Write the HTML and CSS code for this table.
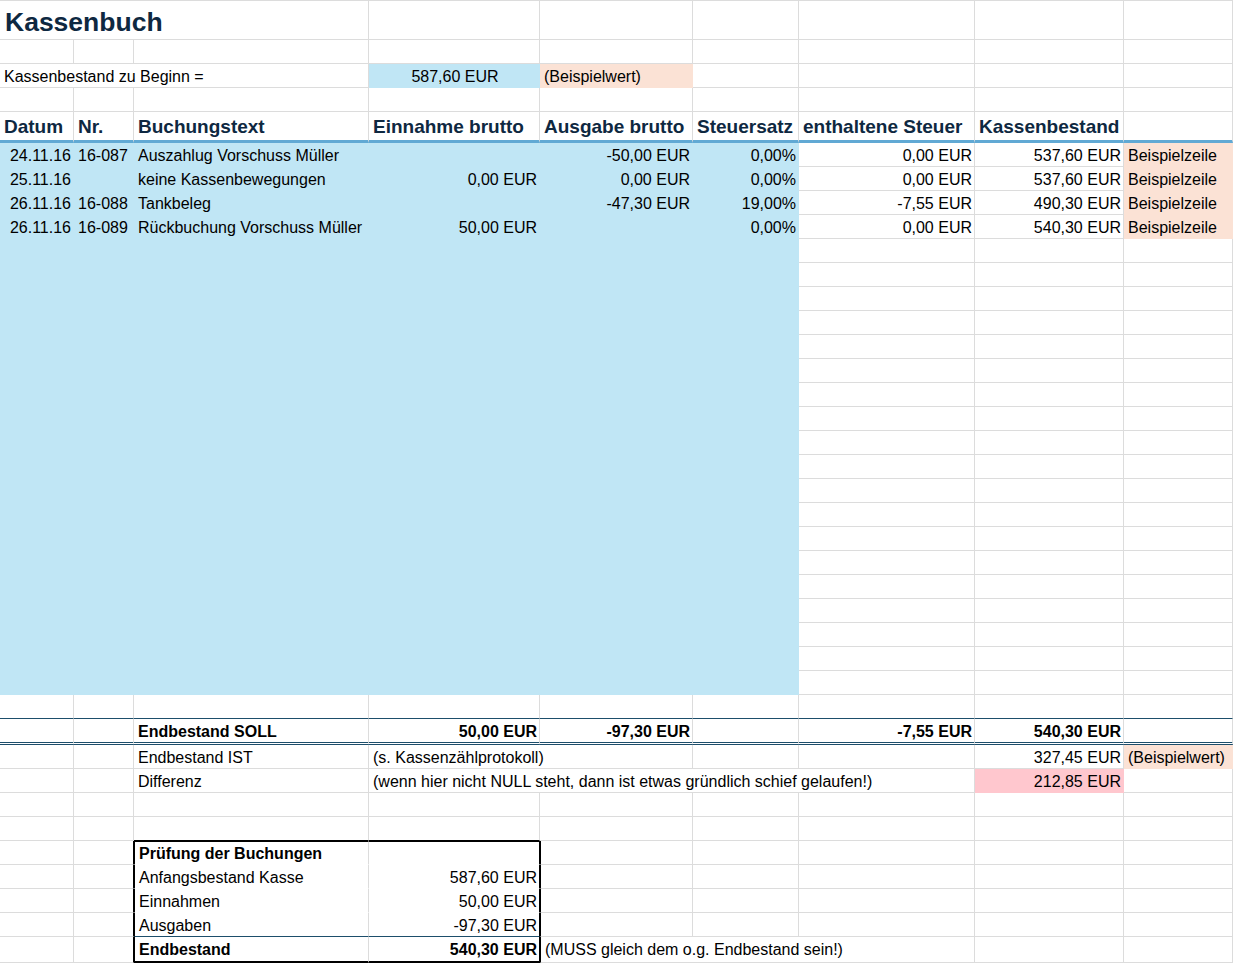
FILE: index.html
```html
<!DOCTYPE html>
<html lang="de">
<head>
<meta charset="utf-8">
<title>Kassenbuch</title>
<link rel="stylesheet" href="styles.css">
</head>
<body>
<div class="sheet">
  <div class="row title-row">
    <div class="c s3 title">Kassenbuch</div>
    <div class="c"></div><div class="c"></div><div class="c"></div><div class="c"></div><div class="c"></div><div class="c"></div>
  </div>
  <div class="row">
    <div class="c"></div><div class="c"></div><div class="c"></div><div class="c"></div><div class="c"></div><div class="c"></div><div class="c"></div><div class="c"></div><div class="c"></div>
  </div>
  <div class="row">
    <div class="c s3">Kassenbestand zu Beginn =</div>
    <div class="c ctr b">587,60 EUR</div>
    <div class="c p">(Beispielwert)</div>
    <div class="c"></div><div class="c"></div><div class="c"></div><div class="c"></div>
  </div>
  <div class="row">
    <div class="c"></div><div class="c"></div><div class="c"></div><div class="c"></div><div class="c"></div><div class="c"></div><div class="c"></div><div class="c"></div><div class="c"></div>
  </div>
  <div class="row hdr">
    <div class="c">Datum</div>
    <div class="c">Nr.</div>
    <div class="c">Buchungstext</div>
    <div class="c">Einnahme brutto</div>
    <div class="c">Ausgabe brutto</div>
    <div class="c">Steuersatz</div>
    <div class="c">enthaltene Steuer</div>
    <div class="c">Kassenbestand</div>
    <div class="c"></div>
  </div>

  <div class="row">
    <div class="c b r">24.11.16</div>
    <div class="c b">16-087</div>
    <div class="c b">Auszahlug Vorschuss Müller</div>
    <div class="c b r"></div>
    <div class="c b r">-50,00 EUR</div>
    <div class="c b r">0,00%</div>
    <div class="c r">0,00 EUR</div>
    <div class="c r">537,60 EUR</div>
    <div class="c p">Beispielzeile</div>
  </div>
  <div class="row">
    <div class="c b r">25.11.16</div>
    <div class="c b"></div>
    <div class="c b">keine Kassenbewegungen</div>
    <div class="c b r">0,00 EUR</div>
    <div class="c b r">0,00 EUR</div>
    <div class="c b r">0,00%</div>
    <div class="c r">0,00 EUR</div>
    <div class="c r">537,60 EUR</div>
    <div class="c p">Beispielzeile</div>
  </div>
  <div class="row">
    <div class="c b r">26.11.16</div>
    <div class="c b">16-088</div>
    <div class="c b">Tankbeleg</div>
    <div class="c b r"></div>
    <div class="c b r">-47,30 EUR</div>
    <div class="c b r">19,00%</div>
    <div class="c r">-7,55 EUR</div>
    <div class="c r">490,30 EUR</div>
    <div class="c p">Beispielzeile</div>
  </div>
  <div class="row">
    <div class="c b r">26.11.16</div>
    <div class="c b">16-089</div>
    <div class="c b">Rückbuchung Vorschuss Müller</div>
    <div class="c b r">50,00 EUR</div>
    <div class="c b r"></div>
    <div class="c b r">0,00%</div>
    <div class="c r">0,00 EUR</div>
    <div class="c r">540,30 EUR</div>
    <div class="c p">Beispielzeile</div>
  </div>

  <div class="row"><div class="c b"></div><div class="c b"></div><div class="c b"></div><div class="c b"></div><div class="c b"></div><div class="c b"></div><div class="c"></div><div class="c"></div><div class="c"></div></div>
  <div class="row"><div class="c b"></div><div class="c b"></div><div class="c b"></div><div class="c b"></div><div class="c b"></div><div class="c b"></div><div class="c"></div><div class="c"></div><div class="c"></div></div>
  <div class="row"><div class="c b"></div><div class="c b"></div><div class="c b"></div><div class="c b"></div><div class="c b"></div><div class="c b"></div><div class="c"></div><div class="c"></div><div class="c"></div></div>
  <div class="row"><div class="c b"></div><div class="c b"></div><div class="c b"></div><div class="c b"></div><div class="c b"></div><div class="c b"></div><div class="c"></div><div class="c"></div><div class="c"></div></div>
  <div class="row"><div class="c b"></div><div class="c b"></div><div class="c b"></div><div class="c b"></div><div class="c b"></div><div class="c b"></div><div class="c"></div><div class="c"></div><div class="c"></div></div>
  <div class="row"><div class="c b"></div><div class="c b"></div><div class="c b"></div><div class="c b"></div><div class="c b"></div><div class="c b"></div><div class="c"></div><div class="c"></div><div class="c"></div></div>
  <div class="row"><div class="c b"></div><div class="c b"></div><div class="c b"></div><div class="c b"></div><div class="c b"></div><div class="c b"></div><div class="c"></div><div class="c"></div><div class="c"></div></div>
  <div class="row"><div class="c b"></div><div class="c b"></div><div class="c b"></div><div class="c b"></div><div class="c b"></div><div class="c b"></div><div class="c"></div><div class="c"></div><div class="c"></div></div>
  <div class="row"><div class="c b"></div><div class="c b"></div><div class="c b"></div><div class="c b"></div><div class="c b"></div><div class="c b"></div><div class="c"></div><div class="c"></div><div class="c"></div></div>
  <div class="row"><div class="c b"></div><div class="c b"></div><div class="c b"></div><div class="c b"></div><div class="c b"></div><div class="c b"></div><div class="c"></div><div class="c"></div><div class="c"></div></div>
  <div class="row"><div class="c b"></div><div class="c b"></div><div class="c b"></div><div class="c b"></div><div class="c b"></div><div class="c b"></div><div class="c"></div><div class="c"></div><div class="c"></div></div>
  <div class="row"><div class="c b"></div><div class="c b"></div><div class="c b"></div><div class="c b"></div><div class="c b"></div><div class="c b"></div><div class="c"></div><div class="c"></div><div class="c"></div></div>
  <div class="row"><div class="c b"></div><div class="c b"></div><div class="c b"></div><div class="c b"></div><div class="c b"></div><div class="c b"></div><div class="c"></div><div class="c"></div><div class="c"></div></div>
  <div class="row"><div class="c b"></div><div class="c b"></div><div class="c b"></div><div class="c b"></div><div class="c b"></div><div class="c b"></div><div class="c"></div><div class="c"></div><div class="c"></div></div>
  <div class="row"><div class="c b"></div><div class="c b"></div><div class="c b"></div><div class="c b"></div><div class="c b"></div><div class="c b"></div><div class="c"></div><div class="c"></div><div class="c"></div></div>
  <div class="row"><div class="c b"></div><div class="c b"></div><div class="c b"></div><div class="c b"></div><div class="c b"></div><div class="c b"></div><div class="c"></div><div class="c"></div><div class="c"></div></div>
  <div class="row"><div class="c b"></div><div class="c b"></div><div class="c b"></div><div class="c b"></div><div class="c b"></div><div class="c b"></div><div class="c"></div><div class="c"></div><div class="c"></div></div>
  <div class="row"><div class="c b"></div><div class="c b"></div><div class="c b"></div><div class="c b"></div><div class="c b"></div><div class="c b"></div><div class="c"></div><div class="c"></div><div class="c"></div></div>
  <div class="row"><div class="c b"></div><div class="c b"></div><div class="c b"></div><div class="c b"></div><div class="c b"></div><div class="c b"></div><div class="c"></div><div class="c"></div><div class="c"></div></div>

  <div class="row pre-tot">
    <div class="c"></div><div class="c"></div><div class="c"></div><div class="c"></div><div class="c"></div><div class="c"></div><div class="c"></div><div class="c"></div><div class="c"></div>
  </div>
  <div class="row tot">
    <div class="c"></div>
    <div class="c"></div>
    <div class="c">Endbestand SOLL</div>
    <div class="c r">50,00 EUR</div>
    <div class="c r">-97,30 EUR</div>
    <div class="c"></div>
    <div class="c r">-7,55 EUR</div>
    <div class="c r">540,30 EUR</div>
    <div class="c"></div>
  </div>
  <div class="row">
    <div class="c"></div>
    <div class="c"></div>
    <div class="c">Endbestand IST</div>
    <div class="c s2">(s. Kassenzählprotokoll)</div>
    <div class="c"></div>
    <div class="c"></div>
    <div class="c r">327,45 EUR</div>
    <div class="c p">(Beispielwert)</div>
  </div>
  <div class="row">
    <div class="c"></div>
    <div class="c"></div>
    <div class="c">Differenz</div>
    <div class="c s4">(wenn hier nicht NULL steht, dann ist etwas gründlich schief gelaufen!)</div>
    <div class="c r pink">212,85 EUR</div>
    <div class="c"></div>
  </div>
  <div class="row">
    <div class="c"></div><div class="c"></div><div class="c"></div><div class="c"></div><div class="c"></div><div class="c"></div><div class="c"></div><div class="c"></div><div class="c"></div>
  </div>
  <div class="row">
    <div class="c"></div><div class="c"></div><div class="c pre-box"></div><div class="c pre-box"></div><div class="c"></div><div class="c"></div><div class="c"></div><div class="c"></div><div class="c"></div>
  </div>

  <div class="row">
    <div class="c"></div>
    <div class="c bxl"></div>
    <div class="c in bl bt bold">Prüfung der Buchungen</div>
    <div class="c in br bt r"></div>
    <div class="c bxr"></div>
    <div class="c"></div><div class="c"></div><div class="c"></div><div class="c"></div>
  </div>
  <div class="row">
    <div class="c"></div>
    <div class="c bxl"></div>
    <div class="c in bl">Anfangsbestand Kasse</div>
    <div class="c in br r">587,60 EUR</div>
    <div class="c bxr"></div>
    <div class="c"></div><div class="c"></div><div class="c"></div><div class="c"></div>
  </div>
  <div class="row">
    <div class="c"></div>
    <div class="c bxl"></div>
    <div class="c in bl">Einnahmen</div>
    <div class="c in br r">50,00 EUR</div>
    <div class="c bxr"></div>
    <div class="c"></div><div class="c"></div><div class="c"></div><div class="c"></div>
  </div>
  <div class="row">
    <div class="c"></div>
    <div class="c bxl"></div>
    <div class="c in nb bl">Ausgaben</div>
    <div class="c in nb br r">-97,30 EUR</div>
    <div class="c bxr"></div>
    <div class="c"></div><div class="c"></div><div class="c"></div><div class="c"></div>
  </div>
  <div class="row last-box">
    <div class="c"></div>
    <div class="c bxl"></div>
    <div class="c in bb bl bold">Endbestand</div>
    <div class="c in bb br r bold">540,30 EUR</div>
    <div class="c bxr s3">(MUSS gleich dem o.g. Endbestand sein!)</div>
    <div class="c"></div><div class="c"></div>
  </div>
  <div class="row">
    <div class="c"></div><div class="c"></div><div class="c"></div><div class="c"></div><div class="c"></div><div class="c"></div><div class="c"></div><div class="c"></div><div class="c"></div>
  </div>
</div>
</body>
</html>
```

FILE: styles.css
```css
* {
  box-sizing: border-box;
  margin: 0;
  padding: 0;
}

html,
body {
  overflow: hidden;
  background: #ffffff;
}

body {
  font-family: "Liberation Sans", Arial, sans-serif;
  font-size: 16px;
  color: #000000;
}

.sheet {
  width: 1233px;
  border-top: 1px solid #dcdcdc;
}

.row {
  display: grid;
  grid-template-columns: 74px 60px 235px 171px 153px 106px 176px 149px 109px;
  height: 24px;
}

.c {
  display: flex;
  align-items: flex-end;
  justify-content: flex-start;
  min-width: 0;
  padding: 0 2px 1px 4px;
  border-right: 1px solid #dcdcdc;
  border-bottom: 1px solid #dcdcdc;
  line-height: 18px;
  white-space: nowrap;
}

.r {
  justify-content: flex-end;
}

.ctr {
  justify-content: center;
}

.s2 {
  grid-column: span 2;
}

.s3 {
  grid-column: span 3;
}

.s4 {
  grid-column: span 4;
}

.bold {
  font-weight: 700;
}

.b {
  background: #c0e6f5;
  border-color: transparent;
}

.p {
  background: #fbe2d5;
  border-color: transparent;
}

.pink {
  background: #ffc7ce;
  border-color: transparent;
}

.title-row {
  height: 39px;
}

.title {
  font-size: 26.5px;
  font-weight: 700;
  line-height: 30px;
  color: #0e2841;
  padding-bottom: 2px;
  padding-left: 5px;
}

.hdr {
  height: 31px;
}

.hdr .c {
  border-bottom: 3px solid #61a9d4;
  font-size: 19px;
  font-weight: 700;
  line-height: 22px;
  color: #0e2841;
  padding-bottom: 2px;
}

.pre-tot .c {
  border-bottom-color: #1d4e6b;
}

.tot {
  height: 26px;
}

.tot .c {
  border-bottom: 3px double #1d4e6b;
  font-weight: 700;
}

/* Prüfungs-Box */
.pre-box {
  border-bottom-color: #000000;
}

.bxl {
  border-right-color: #000000;
}

.bxr {
  border-left: 1px solid #000000;
}

.in {
  border-bottom-color: transparent;
}

.bl {
  border-left: 1px solid #000000;
}

.br {
  border-right-color: #000000;
}

.bt {
  border-top: 1px solid #000000;
}

.nb {
  border-bottom-color: #1d4e6b;
}

.last-box {
  height: 26px;
}

.bb {
  border-bottom: 2px solid #000000;
  padding-bottom: 2px;
}

.last-box .bxr {
  padding-bottom: 3px;
}
```
